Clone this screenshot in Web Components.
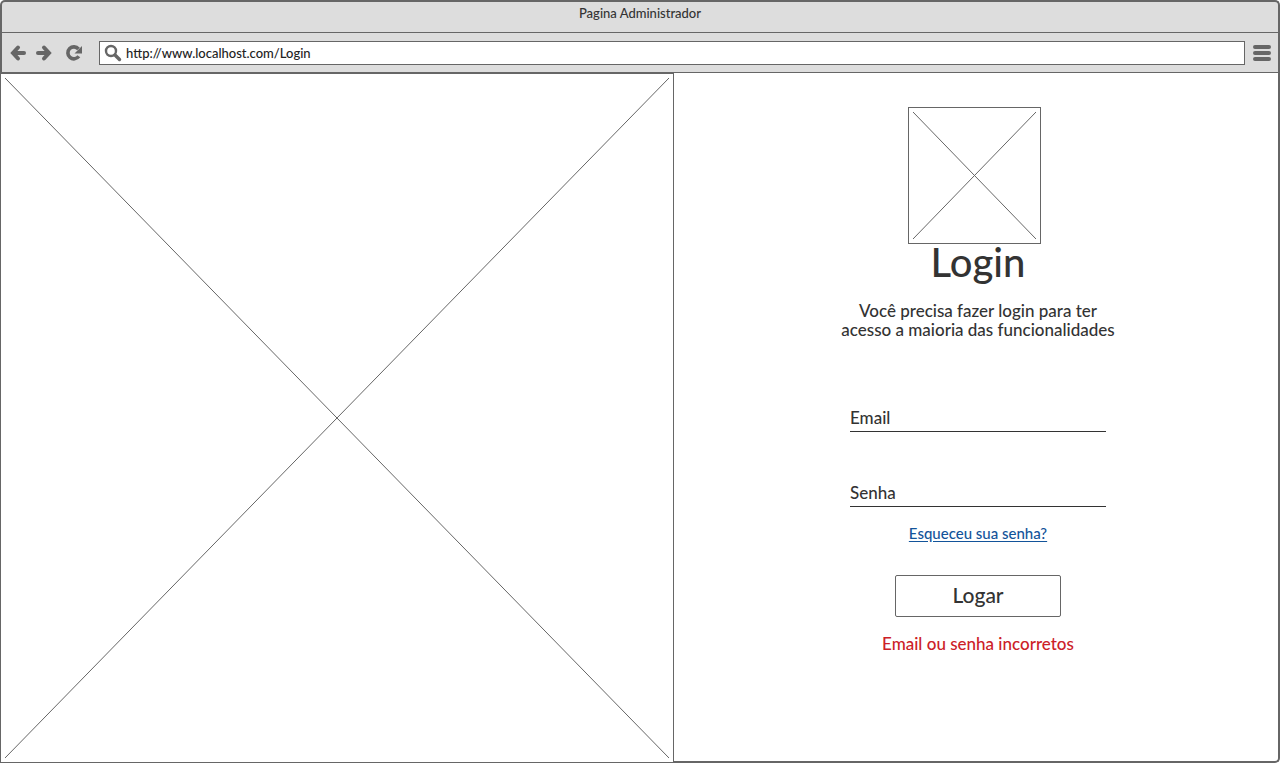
<!DOCTYPE html>
<html lang="pt-BR">
<head>
<meta charset="utf-8">
<meta name="viewport" content="width=device-width, initial-scale=1">
<title>Pagina Administrador</title>
<style>
  body {
    margin: 0;
    background: #fff;
    color: #333;
    font-family: Lato, "Open Sans", sans-serif;
    font-weight: 500;
    --line: #666;
    --chrome: #ddd;
  }
</style>
</head>
<body>
<browser-window heading="Pagina Administrador" address="http://www.localhost.com/Login">
  <image-placeholder slot="media"></image-placeholder>
  <login-panel></login-panel>
</browser-window>

<script>
  const define = (name, html, setup) => {
    const template = document.createElement('template');
    template.innerHTML = html;
    customElements.define(name, class extends HTMLElement {
      constructor() {
        super();
        this.attachShadow({ mode: 'open' }).append(template.content.cloneNode(true));
      }
      connectedCallback() {
        if (setup) setup(this, this.shadowRoot);
      }
    });
  };

  // Box with crossed diagonals, stretches to the space it is given
  define('image-placeholder', `
    <style>
      :host { display: block; box-sizing: border-box; border: 1px solid var(--line); padding: 4px; background: #fff; }
      svg { display: block; width: 100%; height: 100%; }
    </style>
    <svg stroke="#666" stroke-width="1" aria-hidden="true">
      <line x1="0" y1="0" x2="100%" y2="100%"/>
      <line x1="0" y1="100%" x2="100%" y2="0"/>
    </svg>
  `);

  define('browser-toolbar', `
    <style>
      :host { display: flex; align-items: center; box-sizing: border-box; height: 40px; padding: 0 7px; background: var(--chrome); border-bottom: 1px solid var(--line); }
      button { display: block; padding: 0; border: 0; background: none; color: var(--line); }
      svg { display: block; }
      nav { display: flex; gap: 8px; padding-right: 16px; }
      .reload { margin-left: 4px; }
      form { display: flex; flex: 1; align-items: center; gap: 4px; box-sizing: border-box; height: 24px; padding: 0 4px; border: 1px solid var(--line); background: #fff; color: var(--line); }
      input { flex: 1; min-width: 0; height: 20px; padding: 0; border: 0; outline: 0; background: none; color: #222; font: inherit; font-size: 13px; }
      .menu { margin-left: 8px; }
    </style>
    <nav>
      <button type="button" aria-label="Voltar">
        <svg width="18" height="18" viewBox="0 0 18 18" fill="none" stroke="currentColor" stroke-width="4" stroke-linecap="round"><path d="M5 9h10"/><path d="M9 3.500L4 9l5 5.500" stroke-linejoin="miter"/></svg>
      </button>
      <button type="button" aria-label="Avançar">
        <svg width="18" height="18" viewBox="0 0 18 18" fill="none" stroke="currentColor" stroke-width="4" stroke-linecap="round"><path d="M3 9h10"/><path d="M9 3.500L14 9l-5 5.500" stroke-linejoin="miter"/></svg>
      </button>
      <button type="button" class="reload" aria-label="Recarregar">
        <svg width="18" height="18" viewBox="0 0 18 18"><path d="M13.800 12.300A6 6 0 1 1 13.500 5" fill="none" stroke="currentColor" stroke-width="3.600"/><path d="M17 2v7.500H9.500z" fill="currentColor"/></svg>
      </button>
    </nav>
    <form>
      <svg width="18" height="18" viewBox="0 0 18 18" fill="none" stroke="currentColor" aria-hidden="true"><circle cx="7" cy="7" r="5" stroke-width="2.400"/><path d="M11 11l4.500 4.500" stroke-width="3.400" stroke-linecap="round"/></svg>
      <input type="text" aria-label="Endereço" spellcheck="false">
    </form>
    <button type="button" class="menu" aria-label="Menu">
      <svg width="18" height="18" viewBox="0 0 18 18" stroke="currentColor" stroke-width="4" stroke-linecap="round"><path d="M2 3h14M2 9h14M2 15h14"/></svg>
    </button>
  `);

  define('browser-window', `
    <style>
      :host { display: flex; flex-direction: column; min-height: 100vh; }
      header { border: 2px solid var(--line); border-bottom: 0; border-radius: 5px 5px 0 0; background: var(--chrome); }
      h1 { box-sizing: border-box; height: 31px; margin: 0; padding-top: 3px; border-bottom: 1px solid var(--line); font-size: 13px; font-weight: inherit; line-height: 16px; text-align: center; }
      main { flex: 1; display: grid; grid-template-columns: 337fr 303fr; }
      .pane { box-sizing: border-box; border: solid var(--line); border-width: 0 2px 2px 0; border-radius: 0 0 5px 0; }
    </style>
    <header>
      <h1></h1>
      <browser-toolbar></browser-toolbar>
    </header>
    <main>
      <slot name="media"></slot>
      <div class="pane"><slot></slot></div>
    </main>
  `, (host, root) => {
    root.querySelector('h1').textContent = host.getAttribute('heading');
    const bar = root.querySelector('browser-toolbar');
    bar.shadowRoot.querySelector('input').value = host.getAttribute('address');
  });

  // Underlined field whose label rests on the line
  define('line-field', `
    <style>
      :host { display: block; position: relative; width: 256px; }
      label { position: absolute; left: 0; top: 0; font-size: 17px; line-height: 24px; pointer-events: none; }
      input { display: block; box-sizing: border-box; width: 100%; height: 26px; padding: 0; border: 0; border-bottom: 1px solid #333; outline: 0; background: none; font: inherit; font-size: 17px; }
    </style>
    <label for="field"></label>
    <input id="field">
  `, (host, root) => {
    root.querySelector('label').textContent = host.getAttribute('label');
    root.querySelector('input').type = host.getAttribute('type') || 'text';
  });

  define('login-panel', `
    <style>
      :host { display: flex; flex-direction: column; align-items: center; padding: 34px 0 48px 4px; text-align: center; }
      .brand { width: 140px; }
      image-placeholder { width: 133px; height: 137px; }
      h2 { margin: 0; font-size: 40px; font-weight: inherit; line-height: 36px; }
      .intro { width: 300px; margin: 21px 0 67px; font-size: 17px; line-height: 19px; }
      form { display: flex; flex-direction: column; align-items: center; }
      line-field + line-field { margin-top: 49px; }
      line-field { text-align: left; }
      a { margin-top: 16px; color: #13549a; font-size: 15px; line-height: 20px; text-underline-offset: 2px; }
      button { width: 166px; height: 42px; margin-top: 32px; padding: 0 0 4px; border: 1px solid var(--line); border-radius: 2px; background: #fff; color: inherit; font: inherit; font-size: 21px; }
      .error { margin: 16px 0 0; color: #cc2027; font-size: 17px; line-height: 22px; }
    </style>
    <div class="brand"><image-placeholder></image-placeholder></div>
    <h2>Login</h2>
    <p class="intro">Você precisa fazer login para ter<br>acesso a maioria das funcionalidades</p>
    <form>
      <line-field label="Email" type="email"></line-field>
      <line-field label="Senha" type="password"></line-field>
      <a href="#senha">Esqueceu sua senha?</a>
      <button type="button">Logar</button>
      <p class="error" role="alert">Email ou senha incorretos</p>
    </form>
  `);
</script>
</body>
</html>
